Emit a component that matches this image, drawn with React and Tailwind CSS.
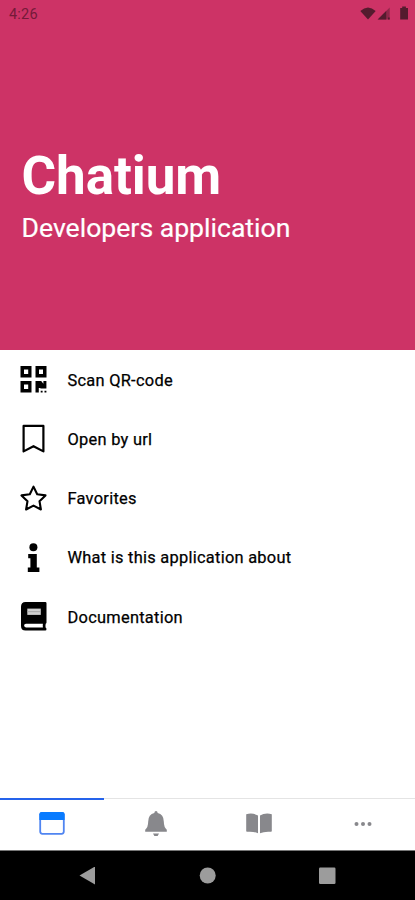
const rows = [
  {
    label: "Scan QR-code",
    icon: (
      <path
        fillRule="evenodd"
        d="M.5 0h11v11.5H.5zM4 3.6v4.3h4.2V3.6zM15.5 0h11v11.5h-11zM19 3.6v4.3h4V3.6zM.5 15h11v11.5H.5zM4 18.6v4.3h4.2v-4.3zM15.5 15h5.7l2.2 2.8V15h3v7.5h-6v-.6h-1.6v4.6h-3.3zM20.7 24.7h1.9v1.8h-1.9zM24.5 24.7h1.9v1.8h-1.9z"
      />
    ),
  },
  {
    label: "Open by url",
    icon: (
      <path
        d="M3.6.9h19.8v25.5L13.5 21.2 3.6 26.4z"
        fill="none"
        stroke="currentColor"
        strokeWidth="2.2"
        strokeLinejoin="round"
      />
    ),
  },
  {
    label: "Favorites",
    icon: (
      <path
        d="M13.5 1.6l3.7 7.6 8.3 1.2-6 5.8 1.4 8.3-7.4-3.9-7.4 3.9 1.4-8.3-6-5.8 8.3-1.2z"
        fill="none"
        stroke="currentColor"
        strokeWidth="2.1"
        strokeLinejoin="round"
      />
    ),
  },
  {
    label: "What is this application about",
    icon: (
      <>
        <circle cx="13.4" cy="3.2" r="4" />
        <path d="M8.2 10h8.6v13.5h2.6v4.6H7.8v-4.6h2.6v-9.2H8.2z" />
      </>
    ),
  },
  {
    label: "Documentation",
    icon: (
      <>
        <path
          fillRule="evenodd"
          d="M5.5-1H25.3q1.2 0 1.2 1.2v19.3q0 .8-.8 1.2-.5 2.1 0 4.1.8.3.8 1.2 0 1.6-1.2 1.6H5.5Q1 27.6 1 23V3.7Q1-1 5.5-1zM6 20.8q-1.9 0-1.9 1.8T6 24.4h16.9q-.3-1.8 0-3.6z"
        />
        <path d="M7.3 5.6h13.5v6.3H7.3z" fill="#d0d0d0" />
        <path d="M7.3 8.7h13.5" stroke="#a5a5a5" strokeWidth="1" />
      </>
    ),
  },
];

function StatusBar() {
  return (
    <div className="flex h-7 items-center justify-between pl-[9px] pr-[7px] text-[#741a39]">
      <span className="pt-[2px] text-[14.5px] leading-none tracking-[0.2px]">4:26</span>
      <svg width="48" height="16" viewBox="0 0 48 16" fill="#541b2e">
        <path d="M.3 5Q8-2 15.7 5L8 13.5z" />
        <path d="M29.7 1.4v12H17.5z" opacity=".5" />
        <path d="M26.2 5v8.4h-8.4zM28 11.4h1.7v2H28z" />
        <path d="M40.2 2h2V.6h3.7V2H48v11.5h-7.8z" />
      </svg>
    </div>
  );
}

function TabBar() {
  return (
    <nav className="grid h-[53px] grid-cols-4 border-b border-[#777] text-[#88888c]">
      <div className="flex justify-center border-t-2 border-[#2563eb] pt-[11px]">
        <svg width="28" height="26" viewBox="0 0 28 26">
          <rect x="2.2" y="1.8" width="23.6" height="21" rx="2.2" fill="#fff" stroke="#5085f1" strokeWidth="1.8" />
          <path d="M1.4 8.9V3.2Q1.4 1 3.6 1h20.8q2.2 0 2.2 2.2v5.7z" fill="#087bff" />
        </svg>
      </div>
      <div className="flex justify-center border-t border-[#e4e4e4] pt-3">
        <svg width="24" height="27" viewBox="0 0 24 27" fill="currentColor">
          <path d="M12 0q1.5 0 1.7 2.1 5.9 1.2 6.1 8.5.1 6 3 8.2v2H1.2v-2q2.9-2.2 3-8.2.2-7.3 6.1-8.5Q10.5 0 12 0zM9 22.4h6q-.7 2.7-3 2.7t-3-2.7z" />
        </svg>
      </div>
      <div className="flex justify-center border-t border-[#e4e4e4] pt-[14px]">
        <svg width="28" height="22" viewBox="0 0 28 22" fill="currentColor">
          <path d="M1.2 1.2Q8-.5 13 2.6v17.6q-4.4-2-11-1.4-.8 0-.8-.8zM26.8 1.2Q20-.5 15 2.6v17.6q4.4-2 11-1.4.8 0 .8-.8z" />
        </svg>
      </div>
      <div className="flex justify-center border-t border-[#e4e4e4] pt-[22px]">
        <svg width="18" height="6" viewBox="0 0 18 6" fill="currentColor">
          <circle cx="2.5" cy="3" r="2" />
          <circle cx="9" cy="3" r="2" />
          <circle cx="15.5" cy="3" r="2" />
        </svg>
      </div>
    </nav>
  );
}

export default function App() {
  return (
    <div className="flex h-[900px] w-[415px] flex-col overflow-hidden bg-white font-[Roboto,sans-serif] text-black">
      <header className="h-[350px] shrink-0 bg-[#cd3366]">
        <StatusBar />
        <div className="px-[21.5px] pt-[116px] text-white">
          <h1 className="text-[53px] font-bold leading-[64px] tracking-[-0.1px]">Chatium</h1>
          <p className="text-[26.6px] leading-[40px] [-webkit-text-stroke:0.2px_white]">Developers application</p>
        </div>
      </header>
      <main className="flex-1">
        {rows.map((row) => (
          <div key={row.label} className="flex h-[59.25px] items-center gap-5 pl-5">
            <svg width="27" height="27" viewBox="0 0 27 27" fill="currentColor" className="shrink-0 overflow-visible">
              {row.icon}
            </svg>
            <span className="whitespace-nowrap pl-[0.5px] pt-[2px] text-[16.4px] leading-6 tracking-[0.27px] [-webkit-text-stroke:0.25px_black]">
              {row.label}
            </span>
          </div>
        ))}
      </main>
      <TabBar />
      <footer className="flex h-[49px] shrink-0 items-center bg-black pl-[79px]">
        <svg width="257" height="18" viewBox="0 0 257 18" fill="#9c9c9c">
          <path d="M.5 8.5L16-.5v18z" />
          <circle cx="128.7" cy="8.5" r="8" />
          <rect x="240" y=".5" width="16.5" height="16.5" rx="1.2" />
        </svg>
      </footer>
    </div>
  );
}
